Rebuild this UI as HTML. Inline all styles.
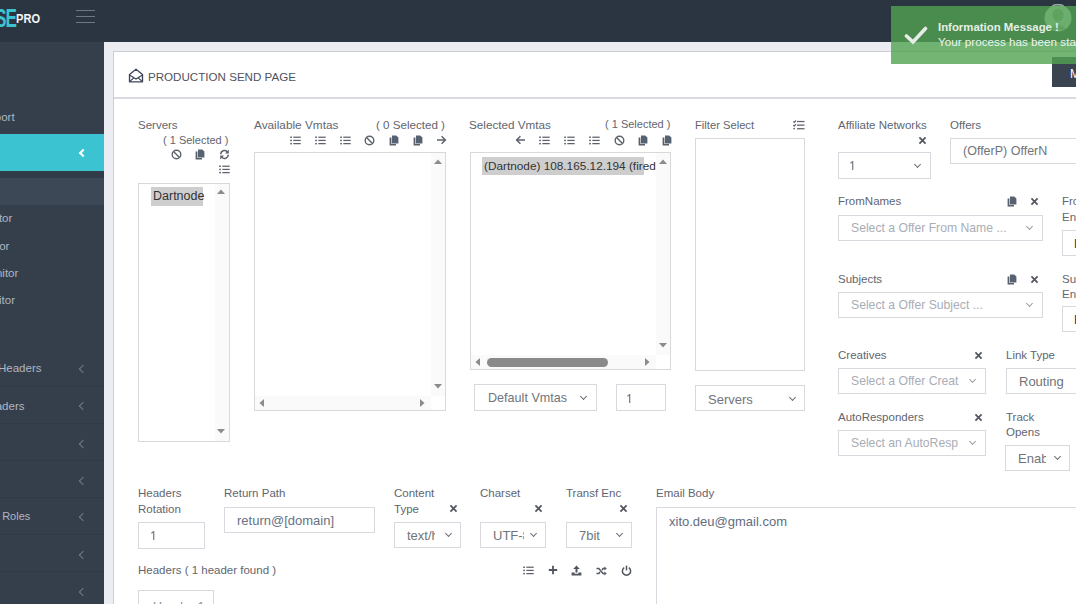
<!DOCTYPE html>
<html><head><meta charset="utf-8">
<style>
*{box-sizing:border-box;margin:0;padding:0}
html,body{width:1076px;height:604px;overflow:hidden;background:#ebedf3;font-family:"Liberation Sans",sans-serif}
.a{position:absolute}
#top{left:0;top:0;width:1076px;height:42px;background:#2b3541}
#side{left:0;top:42px;width:104px;height:562px;background:#353f4c}
#card{left:113px;top:51px;width:970px;height:560px;background:#fff;border:1.5px solid #d6d6d9}
.lbl{position:absolute;margin-top:1px;font-size:11.5px;color:#62656f;white-space:nowrap;line-height:15.5px}
.box{position:absolute;border:1px solid #d8d9dd;background:#fff}
.inp{position:absolute;border:1px solid #d8d9de;background:#fff;font-size:13px;color:#717479;white-space:nowrap;overflow:hidden}
.chev{position:absolute;width:5px;height:5px;border-right:1.3px solid #6a6f7a;border-bottom:1.3px solid #6a6f7a;transform:rotate(45deg)}
.side-t{position:absolute;font-size:11.5px;color:#aeb6c2;white-space:nowrap}
.sch{position:absolute;margin-top:1px;width:6px;height:6px;border-left:1.2px solid #717b88;border-bottom:1.2px solid #717b88;transform:rotate(45deg)}
.sep{position:absolute;left:0;width:104px;height:1px;background:#313b48}
.ic{position:absolute}
</style></head><body>
<!-- TOP BAR -->
<div class="a" style="left:0;top:0;width:1076px;height:42px;background:#2b3541"></div>
<div class="a" style="left:-84px;top:5px;width:100px;text-align:right;font-size:26px;font-weight:bold;color:#3cc3cf;line-height:26px;letter-spacing:-1.5px;transform:scaleX(0.66);transform-origin:right top">SE</div>
<div class="a" style="left:16px;top:12px;font-size:13.5px;font-weight:bold;color:#f4f6f8;line-height:14px;transform:scaleX(0.82);transform-origin:left top">PRO</div>
<div class="a" style="left:76px;top:10px;width:19px;height:1.3px;background:#6d7886"></div>
<div class="a" style="left:76px;top:16px;width:19px;height:1.3px;background:#6d7886"></div>
<div class="a" style="left:76px;top:22px;width:19px;height:1.3px;background:#6d7886"></div>
<!-- SIDEBAR -->
<div class="a" style="left:0;top:42px;width:104px;height:562px;background:#353f4c"></div>
<div class="side-t" style="left:-18px;top:111px">Import</div>
<div class="a" style="left:0;top:134px;width:104px;height:37px;background:#3bc3d1"></div>
<div class="a" style="left:80px;top:150px;width:6px;height:6px;border-left:2px solid #fff;border-bottom:2px solid #fff;transform:rotate(45deg)"></div>
<div class="a" style="left:0;top:171px;width:104px;height:7px;background:#323c48"></div>
<div class="a" style="left:0;top:178px;width:104px;height:27px;background:#3d4856"></div>
<div class="side-t" style="left:-26px;top:212px">Monitor</div>
<div class="side-t" style="left:-27px;top:240px">Vendor</div>
<div class="side-t" style="left:-20px;top:267px">Monitor</div>
<div class="side-t" style="left:-15px;top:294px">Editor</div>

<div class="side-t" style="left:-2px;top:362px">Headers</div>
<div class="sch" style="left:80px;top:365px"></div>
<div class="sep" style="top:386px"></div>
<div class="side-t" style="left:-19px;top:400px">Headers</div>
<div class="sch" style="left:80px;top:402px"></div>
<div class="sep" style="top:423px"></div>
<div class="sch" style="left:80px;top:440px"></div>
<div class="sep" style="top:460px"></div>
<div class="sch" style="left:80px;top:477px"></div>
<div class="sep" style="top:497px"></div>
<div class="side-t" style="left:-7px;top:510px;font-size:11px">e Roles</div>
<div class="sch" style="left:80px;top:513px"></div>
<div class="sep" style="top:534px"></div>
<div class="sch" style="left:80px;top:551px"></div>
<div class="sep" style="top:571px"></div>
<div class="sch" style="left:80px;top:588px"></div>
<!-- CARD -->
<div class="a" style="left:113px;top:51px;width:975px;height:570px;background:#fff;border:1.5px solid #cdced2"></div>
<div class="a" style="left:114px;top:97px;width:962px;height:1.5px;background:#d9dadf"></div>
<svg class="a" style="left:128px;top:68px" width="16" height="15" viewBox="0 0 16 15"><path d="M1.5 6.5 L8 1.3 L14.5 6.5 V13.8 H1.5 Z" fill="none" stroke="#3d465a" stroke-width="1.35" stroke-linejoin="round"/><path d="M1.5 7 L8 11 L14.5 7" fill="none" stroke="#3d465a" stroke-width="1.25"/><path d="M1.8 13.5 L6 9.6 M14.2 13.5 L10 9.6" stroke="#3d465a" stroke-width="1.1"/></svg>
<div class="a" style="left:148px;top:69.6px;font-size:11.6px;color:#50525e;line-height:14px;white-space:nowrap">PRODUCTION SEND PAGE</div>
<div class="a" style="left:1052px;top:57px;width:40px;height:30px;background:#3a4350"></div>
<div class="a" style="left:1070px;top:68px;font-size:12px;color:#fff;line-height:13px">M</div>
<svg width="0" height="0" style="position:absolute">
<defs>
<symbol id="ilist" viewBox="0 0 11 9"><rect x="0.2" y="0.5" width="1.7" height="1.5" fill="#5e626c"/><rect x="0.2" y="3.7" width="1.7" height="1.5" fill="#5e626c"/><rect x="0.2" y="6.9" width="1.7" height="1.5" fill="#5e626c"/><rect x="3.3" y="0.6" width="7.4" height="1.25" fill="#5e626c"/><rect x="3.3" y="3.8" width="7.4" height="1.25" fill="#5e626c"/><rect x="3.3" y="7.0" width="7.4" height="1.25" fill="#5e626c"/></symbol>
<symbol id="iban" viewBox="0 0 11 11"><circle cx="5.5" cy="5.5" r="4.3" fill="none" stroke="#5e626c" stroke-width="1.4"/><path d="M2.5 2.5 L8.5 8.5" stroke="#5e626c" stroke-width="1.4"/></symbol>
<symbol id="icopy" viewBox="0 0 10 11"><path d="M0.6 2.6 H2.4 V9.1 H7 V10.5 H0.6 Z" fill="#5a5f69"/><path d="M3 0.4 H7.2 L9.4 2.6 V8.5 H3 Z" fill="#566272"/></symbol>
<symbol id="isync" viewBox="0 0 11 11"><path d="M1.7 5.2 A3.8 3.8 0 0 1 8.2 2.7" fill="none" stroke="#5e626c" stroke-width="1.6"/><path d="M9.8 0.6 V4.4 H6 Z" fill="#5e626c"/><path d="M9.3 5.8 A3.8 3.8 0 0 1 2.8 8.3" fill="none" stroke="#5e626c" stroke-width="1.6"/><path d="M1.2 10.4 V6.6 H5 Z" fill="#5e626c"/></symbol>
<symbol id="iar" viewBox="0 0 11 10"><path d="M1 5 H9.3 M5.6 1.2 L9.4 5 L5.6 8.8" fill="none" stroke="#5e626c" stroke-width="1.5"/></symbol>
<symbol id="ial" viewBox="0 0 11 10"><path d="M10 5 H1.7 M5.4 1.2 L1.6 5 L5.4 8.8" fill="none" stroke="#5e626c" stroke-width="1.5"/></symbol>
<symbol id="ix" viewBox="0 0 10 10"><path d="M1.6 1.6 L8.4 8.4 M8.4 1.6 L1.6 8.4" stroke="#51555f" stroke-width="1.9"/></symbol>
<symbol id="itask" viewBox="0 0 12 10"><path d="M0.2 1.5 L1.2 2.5 L3 0.5 M0.2 5.1 L1.2 6.1 L3 4.1" fill="none" stroke="#5e626c" stroke-width="1.15"/><rect x="0.3" y="7.9" width="1.6" height="1.4" fill="#5e626c"/><rect x="4" y="0.9" width="7.5" height="1.25" fill="#5e626c"/><rect x="4" y="4.5" width="7.5" height="1.25" fill="#5e626c"/><rect x="4" y="8.1" width="7.5" height="1.25" fill="#5e626c"/></symbol>
<symbol id="iplus" viewBox="0 0 10 10"><path d="M5 0.8 V9.2 M0.8 5 H9.2" stroke="#51555f" stroke-width="1.8"/></symbol>
<symbol id="iup" viewBox="0 0 11 11"><path d="M5.5 0.6 L8.8 3.9 H6.5 V7.4 H4.5 V3.9 H2.2 Z" fill="#51555f"/><path d="M0.6 7.6 H3.6 V8.8 H7.4 V7.6 H10.4 V10.4 H0.6 Z" fill="#51555f"/></symbol>
<symbol id="irand" viewBox="0 0 11 10"><path d="M0.5 2.5 H2.8 L7 7.5 H8.5 M0.5 7.5 H2.8 L4 6 M6 4 L7 2.5 H8.5" fill="none" stroke="#51555f" stroke-width="1.4"/><path d="M8.3 0.5 L10.8 2.5 L8.3 4.5 Z M8.3 5.5 L10.8 7.5 L8.3 9.5 Z" fill="#51555f"/></symbol>
<symbol id="ipow" viewBox="0 0 11 11"><path d="M3.2 2.7 A4.1 4.1 0 1 0 7.8 2.7" fill="none" stroke="#51555f" stroke-width="1.5"/><path d="M5.5 0.6 V5.4" stroke="#51555f" stroke-width="1.5"/></symbol>
<symbol id="ione" viewBox="0 0 4 9"><path d="M0.4 2.2 L2.7 0.6 V9" fill="none" stroke="#7a7d84" stroke-width="1.25"/></symbol>
<symbol id="iup3" viewBox="0 0 8 5"><path d="M0 5 L4 0.5 L8 5 Z" fill="#8b8b8b"/></symbol>
<symbol id="idn3" viewBox="0 0 8 5"><path d="M0 0 L4 4.5 L8 0 Z" fill="#8b8b8b"/></symbol>
<symbol id="ilt3" viewBox="0 0 5 8"><path d="M5 0 L0.5 4 L5 8 Z" fill="#8b8b8b"/></symbol>
<symbol id="irt3" viewBox="0 0 5 8"><path d="M0 0 L4.5 4 L0 8 Z" fill="#8b8b8b"/></symbol>
</defs></svg>

<!-- SERVERS -->
<div class="lbl" style="left:138px;top:117px">Servers</div>
<div class="lbl" style="left:163px;top:132px;font-size:11px">( 1 Selected )</div>
<svg class="ic" style="left:171px;top:149px" width="11" height="11"><use href="#iban"/></svg>
<svg class="ic" style="left:195px;top:149px" width="10" height="11"><use href="#icopy"/></svg>
<svg class="ic" style="left:219px;top:149px" width="11" height="11"><use href="#isync"/></svg>
<svg class="ic" style="left:219px;top:165px" width="11" height="9"><use href="#ilist"/></svg>
<div class="box" style="left:138px;top:183px;width:92px;height:259px"></div>
<div class="a" style="left:215px;top:184px;width:14px;height:257px;background:#fafafb"></div>
<svg class="ic" style="left:217px;top:189px" width="8" height="5"><use href="#iup3"/></svg>
<svg class="ic" style="left:217px;top:429px" width="8" height="5"><use href="#idn3"/></svg>
<div class="a" style="left:151px;top:187px;width:52px;height:19px;background:#cecece"></div>
<div class="a" style="left:153px;top:189px;font-size:12.5px;color:#333;line-height:15px">Dartnode</div>

<!-- AVAILABLE -->
<div class="lbl" style="left:254px;top:117px;font-size:11.8px">Available Vmtas</div>
<div class="lbl" style="left:376px;top:116px;font-size:11.6px">( 0 Selected )</div>
<svg class="ic" style="left:290px;top:136px" width="11" height="9"><use href="#ilist"/></svg>
<svg class="ic" style="left:315px;top:136px" width="11" height="9"><use href="#ilist"/></svg>
<svg class="ic" style="left:340px;top:136px" width="11" height="9"><use href="#ilist"/></svg>
<svg class="ic" style="left:364px;top:135px" width="11" height="11"><use href="#iban"/></svg>
<svg class="ic" style="left:389px;top:135px" width="10" height="11"><use href="#icopy"/></svg>
<svg class="ic" style="left:413px;top:135px" width="10" height="11"><use href="#icopy"/></svg>
<svg class="ic" style="left:436px;top:135px" width="11" height="10"><use href="#iar"/></svg>
<div class="box" style="left:254px;top:152px;width:192px;height:259px"></div>
<div class="a" style="left:431px;top:153px;width:14px;height:243px;background:#fafafb"></div>
<div class="a" style="left:255px;top:396px;width:176px;height:14px;background:#fafafb"></div>
<svg class="ic" style="left:434px;top:159px" width="8" height="5"><use href="#iup3"/></svg>
<svg class="ic" style="left:434px;top:384px" width="8" height="5"><use href="#idn3"/></svg>
<svg class="ic" style="left:259px;top:399px" width="5" height="8"><use href="#ilt3"/></svg>
<svg class="ic" style="left:420px;top:399px" width="5" height="8"><use href="#irt3"/></svg>

<!-- SELECTED -->
<div class="lbl" style="left:469px;top:116px;font-size:11.7px">Selected Vmtas</div>
<div class="lbl" style="left:605px;top:116px;font-size:11px">( 1 Selected )</div>
<svg class="ic" style="left:515px;top:135px" width="11" height="10"><use href="#ial"/></svg>
<svg class="ic" style="left:539px;top:136px" width="11" height="9"><use href="#ilist"/></svg>
<svg class="ic" style="left:564px;top:136px" width="11" height="9"><use href="#ilist"/></svg>
<svg class="ic" style="left:589px;top:136px" width="11" height="9"><use href="#ilist"/></svg>
<svg class="ic" style="left:614px;top:135px" width="11" height="11"><use href="#iban"/></svg>
<svg class="ic" style="left:638px;top:135px" width="10" height="11"><use href="#icopy"/></svg>
<svg class="ic" style="left:662px;top:135px" width="10" height="11"><use href="#icopy"/></svg>
<div class="box" style="left:470px;top:152px;width:201px;height:218px"></div>
<div class="a" style="left:656px;top:153px;width:14px;height:202px;background:#fafafb"></div>
<div class="a" style="left:471px;top:355px;width:185px;height:14px;background:#fafafb"></div>
<div class="a" style="left:482px;top:157px;width:162px;height:18px;background:#cecece"></div>
<div class="a" style="left:484px;top:159px;font-size:11.8px;color:#333;line-height:14px;white-space:nowrap">(Dartnode) 108.165.12.194 (fired</div>
<div class="a" style="left:656px;top:153px;width:14px;height:30px;background:#fafafb"></div>
<svg class="ic" style="left:659px;top:159px" width="8" height="5"><use href="#iup3"/></svg>
<svg class="ic" style="left:659px;top:343px" width="8" height="5"><use href="#idn3"/></svg>
<svg class="ic" style="left:475px;top:358px" width="5" height="8"><use href="#ilt3"/></svg>
<svg class="ic" style="left:645px;top:358px" width="5" height="8"><use href="#irt3"/></svg>
<div class="a" style="left:487px;top:358px;width:121px;height:9px;border-radius:4.5px;background:#8a8a8a"></div>

<div class="inp" style="left:474px;top:384px;width:123px;height:27px"><span class="a" style="left:13px;top:6px;font-size:12.6px">Default Vmtas</span></div>
<div class="chev" style="left:581px;top:394px"></div>
<div class="inp" style="left:616px;top:384px;width:50px;height:27px"></div><svg class="ic" style="left:627px;top:394px" width="4" height="9"><use href="#ione"/></svg>

<!-- FILTER -->
<div class="lbl" style="left:695px;top:117px;font-size:11.2px">Filter Select</div>
<svg class="ic" style="left:793px;top:120px" width="12" height="10"><use href="#itask"/></svg>
<div class="box" style="left:695px;top:138px;width:110px;height:233px"></div>
<div class="inp" style="left:695px;top:385px;width:110px;height:26px"><span class="a" style="left:12px;top:6px">Servers</span></div>
<div class="chev" style="left:790px;top:395px"></div>
<!-- RIGHT COLUMN -->
<div class="lbl" style="left:838px;top:117px">Affiliate Networks</div>
<svg class="ic" style="left:918px;top:136px" width="9" height="9"><use href="#ix"/></svg>
<div class="inp" style="left:838px;top:152px;width:93px;height:27px"></div><svg class="ic" style="left:850px;top:161px" width="4" height="9"><use href="#ione"/></svg>
<div class="chev" style="left:915px;top:162px"></div>
<div class="lbl" style="left:950px;top:117px">Offers</div>
<div class="inp" style="left:950px;top:138px;width:140px;height:26px"><span class="a" style="left:12px;top:5px;font-size:12.5px">(OfferP) OfferN</span></div>

<div class="lbl" style="left:838px;top:193px">FromNames</div>
<svg class="ic" style="left:1007px;top:196px" width="10" height="11"><use href="#icopy"/></svg>
<svg class="ic" style="left:1030px;top:197px" width="9" height="9"><use href="#ix"/></svg>
<div class="lbl" style="left:1062px;top:193px">From</div>
<div class="lbl" style="left:1062px;top:209px">Encoding</div>
<div class="inp" style="left:838px;top:215px;width:205px;height:26px;color:#a9adb6;font-size:12.2px"><span class="a" style="left:12px;top:5px">Select a Offer From Name ...</span></div>
<div class="chev" style="left:1027px;top:224px;border-color:#9a9ea8"></div>
<div class="inp" style="left:1062px;top:230px;width:40px;height:26px"><span class="a" style="left:11px;top:5px;color:#333">B</span></div>

<div class="lbl" style="left:838px;top:271px">Subjects</div>
<svg class="ic" style="left:1007px;top:274px" width="10" height="11"><use href="#icopy"/></svg>
<svg class="ic" style="left:1030px;top:275px" width="9" height="9"><use href="#ix"/></svg>
<div class="lbl" style="left:1062px;top:271px">Subject</div>
<div class="lbl" style="left:1062px;top:286px">Encoding</div>
<div class="inp" style="left:838px;top:292px;width:205px;height:26px;color:#a9adb6;font-size:12.2px"><span class="a" style="left:12px;top:5px">Select a Offer Subject ...</span></div>
<div class="chev" style="left:1027px;top:301px;border-color:#9a9ea8"></div>
<div class="inp" style="left:1062px;top:306px;width:40px;height:26px"><span class="a" style="left:11px;top:5px;color:#333">B</span></div>

<div class="lbl" style="left:838px;top:347px">Creatives</div>
<svg class="ic" style="left:974px;top:351px" width="9" height="9"><use href="#ix"/></svg>
<div class="inp" style="left:838px;top:368px;width:148px;height:26px;color:#a9adb6;font-size:12.2px"><span class="a" style="left:12px;top:5px">Select a Offer Creat</span></div>
<div class="chev" style="left:970px;top:377px;border-color:#9a9ea8"></div>
<div class="lbl" style="left:1006px;top:347px">Link Type</div>
<div class="inp" style="left:1006px;top:368px;width:90px;height:26px"><span class="a" style="left:12px;top:5px">Routing</span></div>

<div class="lbl" style="left:838px;top:409px">AutoResponders</div>
<svg class="ic" style="left:974px;top:413px" width="9" height="9"><use href="#ix"/></svg>
<div class="inp" style="left:838px;top:430px;width:148px;height:26px;color:#a9adb6;font-size:12.2px"><span class="a" style="left:12px;top:5px">Select an AutoResp</span></div>
<div class="chev" style="left:970px;top:439px;border-color:#9a9ea8"></div>
<div class="lbl" style="left:1006px;top:409px">Track</div>
<div class="lbl" style="left:1006px;top:424px">Opens</div>
<div class="inp" style="left:1005px;top:445px;width:65px;height:26px"><span class="a" style="left:12px;top:5px">Enab</span><span class="a" style="left:40px;top:0;width:24px;height:24px;background:#fff"></span></div>
<div class="chev" style="left:1055px;top:454px"></div>

<!-- BOTTOM -->
<div class="lbl" style="left:138px;top:485px">Headers</div>
<div class="lbl" style="left:138px;top:501px">Rotation</div>
<div class="inp" style="left:138px;top:522px;width:67px;height:27px"></div><svg class="ic" style="left:151px;top:531px" width="4" height="9"><use href="#ione"/></svg>
<div class="lbl" style="left:224px;top:485px">Return Path</div>
<div class="inp" style="left:224px;top:507px;width:151px;height:26px;color:#687184"><span class="a" style="left:12px;top:5px">return@[domain]</span></div>

<div class="lbl" style="left:394px;top:485px">Content</div>
<div class="lbl" style="left:394px;top:501px">Type</div>
<svg class="ic" style="left:449px;top:504px" width="9" height="9"><use href="#ix"/></svg>
<div class="inp" style="left:394px;top:522px;width:67px;height:26px"><span class="a" style="left:12px;top:5px">text/html</span><span class="a" style="left:40px;top:0;width:26px;height:24px;background:#fff"></span></div>
<div class="chev" style="left:446px;top:531px"></div>

<div class="lbl" style="left:480px;top:485px">Charset</div>
<svg class="ic" style="left:534px;top:504px" width="9" height="9"><use href="#ix"/></svg>
<div class="inp" style="left:480px;top:522px;width:66px;height:26px"><span class="a" style="left:12px;top:5px">UTF-8</span><span class="a" style="left:43px;top:0;width:21px;height:24px;background:#fff"></span></div>
<div class="chev" style="left:531px;top:531px"></div>

<div class="lbl" style="left:566px;top:485px">Transf Enc</div>
<svg class="ic" style="left:619px;top:504px" width="9" height="9"><use href="#ix"/></svg>
<div class="inp" style="left:566px;top:522px;width:66px;height:26px"><span class="a" style="left:12px;top:5px">7bit</span></div>
<div class="chev" style="left:617px;top:531px"></div>

<div class="lbl" style="left:138px;top:562px">Headers ( 1 header found )</div>
<svg class="ic" style="left:523px;top:566px" width="11" height="9"><use href="#ilist"/></svg>
<svg class="ic" style="left:548px;top:565px" width="10" height="10"><use href="#iplus"/></svg>
<svg class="ic" style="left:571px;top:565px" width="11" height="11"><use href="#iup"/></svg>
<svg class="ic" style="left:596px;top:566px" width="11" height="10"><use href="#irand"/></svg>
<svg class="ic" style="left:621px;top:565px" width="11" height="11"><use href="#ipow"/></svg>
<div class="inp" style="left:138px;top:590px;width:76px;height:40px"><span class="a" style="left:14px;top:9px;font-size:12.5px;color:#8a8d93">Header 1</span></div>

<div class="lbl" style="left:656px;top:485px">Email Body</div>
<div class="inp" style="left:656px;top:507px;width:440px;height:120px;color:#626d80"><span class="a" style="left:12px;top:6px">xito.deu@gmail.com</span></div>

<!-- TOAST -->
<div class="a" style="left:891px;top:6px;width:200px;height:58px;background:rgba(81,163,81,0.8)"></div>
<svg class="a" style="left:1044px;top:4px" width="28" height="28" viewBox="0 0 28 28"><circle cx="14" cy="14" r="13.5" fill="rgba(150,215,150,0.45)"/><path d="M8.5 1.6 A13 13 0 0 1 19.5 1.6" fill="none" stroke="rgba(230,250,230,0.55)" stroke-width="1.2"/><ellipse cx="14" cy="11" rx="5.5" ry="6.5" fill="rgba(70,140,70,0.35)"/><path d="M6 26 Q14 15 22 26 Z" fill="rgba(70,140,70,0.3)"/></svg>
<svg class="a" style="left:904px;top:26px" width="24" height="19" viewBox="0 0 24 19"><path d="M2.5 10 L9 16 L21.5 2.5" fill="none" stroke="#e6ede6" stroke-width="3.6" stroke-linecap="round"/></svg>
<div class="a" style="left:938px;top:20px;font-size:11.4px;font-weight:bold;color:#e6efe6;white-space:nowrap;line-height:14px">Information Message !</div>
<div class="a" style="left:938px;top:35px;font-size:11.7px;color:#eef5ee;white-space:nowrap;line-height:14px">Your process has been started</div>
</body></html>
